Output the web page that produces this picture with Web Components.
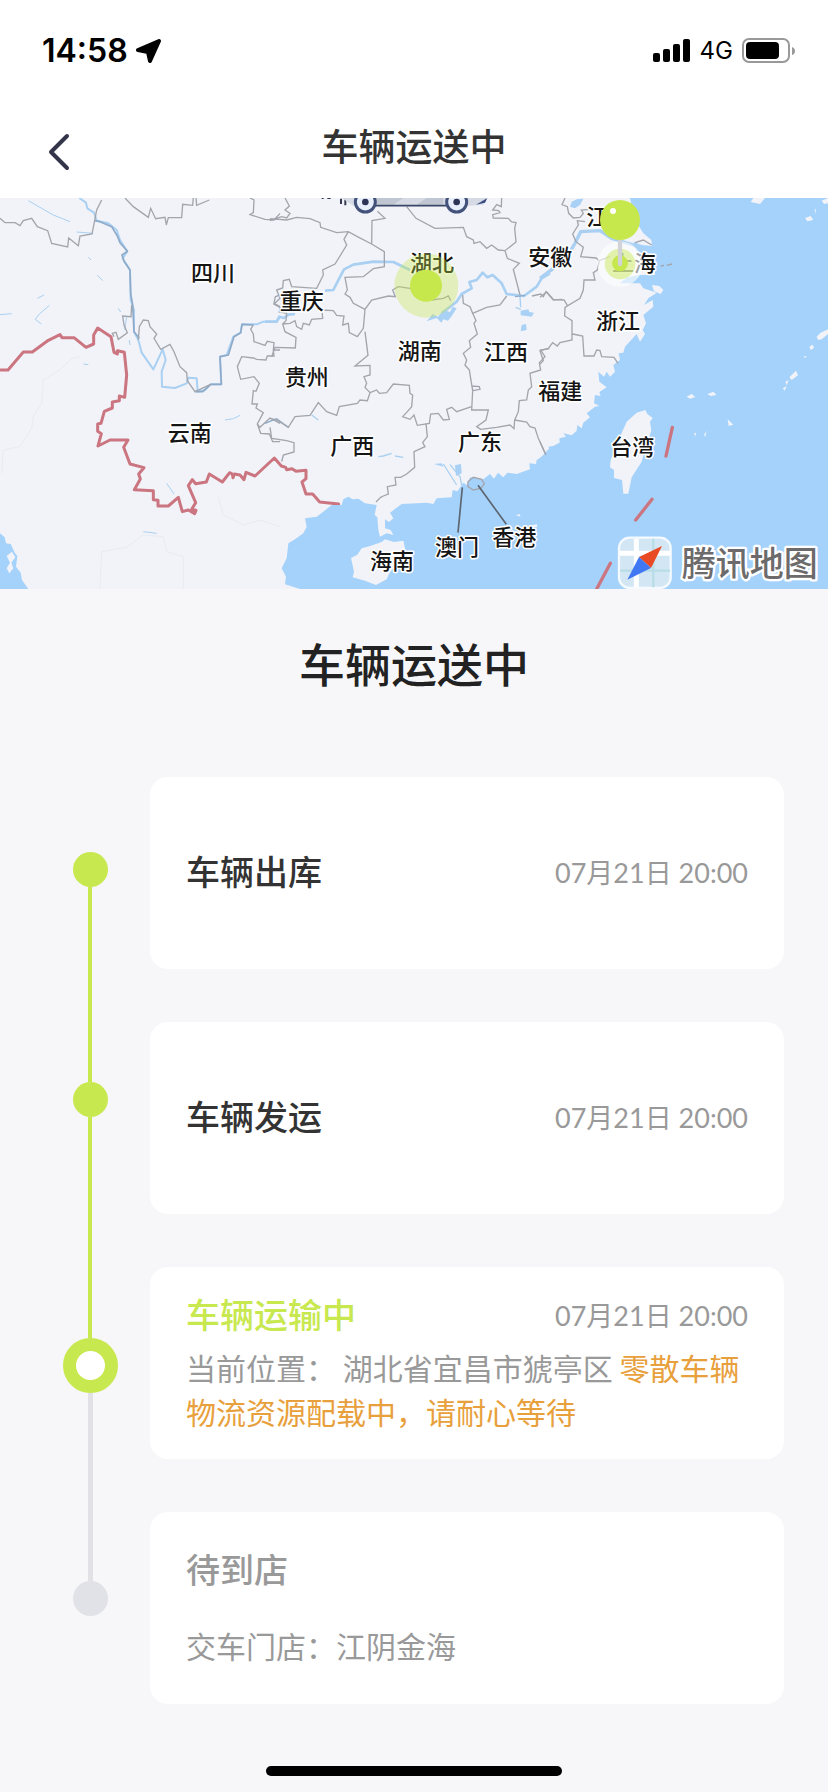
<!DOCTYPE html>
<html lang="zh-CN">
<head>
<meta charset="utf-8">
<meta name="viewport" content="width=device-width, initial-scale=1">
<title>车辆运送中</title>
<style>
body{margin:0;background:#f7f7f9;color:#222;font-family:Inter,"Noto Sans CJK SC",sans-serif}
</style>
</head>
<body>
<track-page>
  <status-bar slot="top" network="4G">14:58</status-bar>
  <nav-bar slot="top">车辆运送中</nav-bar>
  <track-map></track-map>
  <track-steps>
    <span slot="title">车辆运送中</span>
    <step-rail slot="rail"></step-rail>
    <step-card time="07月21日 20:00">车辆出库</step-card>
    <step-card time="07月21日 20:00">车辆发运</step-card>
    <step-card time="07月21日 20:00" state="active">车辆运输中
      <span slot="detail">当前位置： 湖北省宜昌市猇亭区</span>
      <span slot="note">零散车辆物流资源配载中，请耐心等待</span>
    </step-card>
    <step-card state="pending">待到店
      <span slot="detail">交车门店：江阴金海</span>
    </step-card>
  </track-steps>
</track-page>
<script>
const define = (name, html, setup) =>
  customElements.define(
    name,
    class extends HTMLElement {
      constructor() {
        super();
        const t = document.createElement("template");
        t.innerHTML = html;
        this.attachShadow({ mode: "open" }).append(t.content.cloneNode(true));
      }
      connectedCallback() {
        if (setup) setup(this, this.shadowRoot);
      }
    }
  );

define(
  "track-page",
  `<style>
:host{display:flex;flex-direction:column;min-height:100vh}
header{background:#fff}
main{flex:1}
.home{align-self:center;width:36%;max-width:296px;height:10px;margin:16px 0;border-radius:5px;background:#000}
</style>
<header><slot name="top"></slot></header>
<main><slot></slot></main>
<div class="home"></div>`
);

define(
  "status-bar",
  `<style>
:host{display:flex;align-items:center;height:98px;padding:3px 32px 0 42px;box-sizing:border-box;color:#000}
.clock{font-size:32px;line-height:40px;font-weight:600;margin-right:8px}
.net{font-size:24px;line-height:40px;font-weight:400;margin:0 9px 0 9px}
.signal{margin-left:auto}
svg{display:block}
</style>
<span class="clock"><slot></slot></span>
<svg width="26" height="26" viewBox="0 0 26 26"><path d="M23 3 14 23 12 14 2 12Z" stroke="#000" stroke-width="4" stroke-linejoin="round"/></svg>
<svg class="signal" width="38" height="24" viewBox="0 0 38 24">
  <rect y="14" width="7" height="9" rx="2"/><rect x="10" y="10" width="7" height="13" rx="2"/>
  <rect x="20" y="5" width="7" height="18" rx="2"/><rect x="30" width="7" height="23" rx="2"/>
</svg>
<span class="net"></span>
<svg width="54" height="26" viewBox="0 0 54 26">
  <rect x="1" y="1" width="46" height="23" rx="6" fill="none" stroke="#999" stroke-width="2"/>
  <rect x="4" y="4" width="33" height="17" rx="4"/>
  <path d="M50 9q3 1 3 4t-3 4Z" fill="#999"/>
</svg>`,
  (el, root) => {
    root.querySelector(".net").textContent = el.getAttribute("network");
  }
);

define(
  "nav-bar",
  `<style>
:host{display:grid;grid-template-columns:100px 1fr 100px;align-items:center;height:100px}
button{width:60px;height:60px;margin-left:28px;padding:0;border:0;background:none}
svg{display:block}
h1{margin:0;text-align:center;font-size:37px;line-height:50px;font-weight:500;color:#333}
</style>
<button type="button" aria-label="返回"><svg width="60" height="60" viewBox="0 0 60 60"><path d="M39 18 23 34 39 50" fill="none" stroke="#33334a" stroke-width="4" stroke-linecap="round" stroke-linejoin="round"/></svg></button>
<h1><slot></slot></h1>`
);

// [text, x, y] in map units, the centre of each province name
const places = [
  ["四川", 639, 250],
  ["云南", 569, 731],
  ["重庆", 905, 335],
  ["湖北", 1296, 220],
  ["湖南", 1259, 485],
  ["江西", 1518, 489],
  ["贵州", 920, 562],
  ["广西", 1057, 771],
  ["广东", 1440, 759],
  ["澳门", 1371, 1072],
  ["香港", 1543, 1043],
  ["海南", 1176, 1114],
  ["安徽", 1651, 202],
  ["浙江", 1854, 394],
  ["福建", 1681, 604],
  ["台湾", 1897, 772],
  ["江苏", 1825, 83],
  ["上海", 1902, 220]
];

define(
  "track-map",
  `<style>
:host{display:block;height:391px;overflow:hidden;background:#f1f3f8}
svg{display:block;width:100%;height:100%}
text{font-family:"Noto Sans CJK SC",sans-serif;text-anchor:middle;paint-order:stroke;stroke:#fff;stroke-linejoin:round}
#names text{font-size:66px;font-weight:500;fill:#151515;stroke-width:9px}
.brand{font-size:102px;font-weight:500;fill:#6c6a6a;stroke-width:14px}
.sea{fill:#a5d2fb}
.land{fill:#f1f3f8}
.lake{fill:#a9d1f5}
.line{fill:none;stroke:#a3a5ad;stroke-width:4}
.river{fill:none;stroke:#a9d0f2;stroke-width:8;stroke-linejoin:round}
.river.dark{stroke:#8faac8;stroke-width:5}
.state{fill:none;stroke:#cb7580;stroke-width:9;stroke-linejoin:round;stroke-linecap:round}
.faint{fill:none;stroke:#e8ebf1;stroke-width:3}
.lead{stroke:#5d6570;stroke-width:5}
</style>
<svg viewBox="0 24 2484 1173" preserveAspectRatio="xMidYMid slice" role="img" aria-label="地图">
<g>
  <path class="sea" d="M0 1030 14 1042 18 1060 32 1062 45 1090 52 1098 48 1130 62 1148 66 1170 85 1197H0Z"/>
  <path class="land" d="M20 1098 36 1085 46 1102 34 1118 40 1135 28 1150 20 1135 30 1118Z"/>
  <path class="faint" d="M240 500 215 505 180 540 130 570 125 640 100 680 95 715 60 770 10 780 5 850M655 920 670 975 730 1005 780 990 840 1010M300 1197 305 1085 380 1072 430 1035 490 1040 500 1085 550 1100 550 1197"/>
  <path class="river" style="stroke-width:6" d="M238 24 258 38 262 55 282 68 290 92 325 100 350 120 360 150 382 184 368 205 390 240 392 330 402 360 402 425 415 450 425 488 460 538 488 478 497 510 485 545 486 590 525 594 560 580 565 563 590 565 593 605 615 600 632 583 664 583 660 500 680 495 700 440 722 428 726 403 770 403 790 395 830 395 840 380"/>
  <path class="river" style="stroke-width:3" d="M85 32 125 55 160 75 210 95M230 126 280 130M265 202 273 210M292 255 308 272M106 388 118 372 148 346M106 388 124 402M112 325 132 315M0 374 35 371M355 355 362 366M380 380 374 420M388 450 390 465M500 880 522 912M675 690 700 686 720 676M430 1025 470 1030M250 522 265 524"/>
  <path class="river dark" d="M284 92 300 95 335 110 352 138 360 158 382 184 366 195 372 214 390 240 392 310 398 345 402 425 418 445M585 605 608 605 632 583 664 583 660 500 685 495 702 440 722 428 726 403 760 405"/>
  <path class="line" d="M0 85 15 98 45 98 60 107 70 92 95 85 112 110 143 122 155 160 203 171 206 144 235 167 240 138 276 132 284 92 290 60 305 30M375 24 400 50 445 82 452 55 467 86 495 82 499 105 505 83 545 83 548 43 578 46 580 24M588 24 590 46 628 30M750 24 762 30 760 68 750 74 795 88 822 90 840 70"/>
  <path class="line" d="M395 345 393 380 368 378 372 405 382 428 355 448 348 427 337 430 342 440M415 450 418 410 430 390 445 392 450 410 470 432 462 445 482 478 510 463 522 485 540 530 560 548 562 572 585 605 632 583M760 405 752 418 760 432 762 455 795 466 802 454 822 458 820 480 840 480M820 480 822 498 802 498 798 510 770 508 760 504 725 500 712 530 722 568 762 560 778 580 768 604 760 602 756 642 772 642 768 654 790 668 772 702 780 712 810 684 840 700M772 702 782 730 808 732 818 755 840 755M840 315 826 320 822 340 840 350"/>
  <path class="state" d="M0 540H24L70 486H97L145 451 180 434 186 443H222L258 472 281 462V435L293 414 333 440 342 487 352 492V482L373 487 380 555 374 622 358 618V632L337 636V654L313 664 303 700 293 702V724L304 731 294 768 330 750H384L371 772 390 822 432 833 416 852 421 867 403 899 460 902V929L474 931V948H505L535 922 547 965 565 960 584 971 588 961 575 958 587 938 565 887 577 869 587 881 619 876 628 852 667 876 689 848 697 852 699 863 703 852 720 855 732 869 738 847 765 858 823 804 844 828 857 832 860 839 876 836 888 844 918 841V866L906 876 918 912H938L959 936 1016 942"/>
</g>
<g transform="translate(810 0)">
  <path class="sea" d="M90 1197 45 1183 48 1160 35 1135 50 1105 55 1060 75 1048 100 1030 110 1010 105 985 140 980 160 965 185 945 215 945 220 928 235 920 248 928 265 926 285 940 320 945 314 975 322 982 325 1020 330 1040 350 1030 370 1035 362 1020 345 1015 345 988 357 996 370 985 360 968 395 942 440 940 470 938 490 942 500 925 545 922 548 900 562 904 580 878 590 885 600 862 640 868 660 852 672 866 684 848 700 862 712 848 740 852 780 838 778 820 798 822 800 810 815 800 838 775 900 740V1197Z"/>
  <path class="land" d="M243 1104 262 1094 275 1075 300 1068 335 1056 345 1048 372 1056 400 1052 408 1088 395 1120 372 1132 358 1150 350 1168 318 1185 285 1172 248 1162 252 1145ZM738 976 748 972 752 980ZM775 1010 800 1002 802 1012Z"/>
  <path class="lake" d="M470 394 488 372 504 380 520 360 540 366 548 350 560 355 545 378 534 392 520 388 514 398 500 384ZM752 362 775 358 778 366 792 368 785 380 752 376ZM755 405 768 402 770 420 752 424ZM492 822 515 820 520 830ZM555 826 573 822 575 850 558 858Z"/>
  <path class="river" style="stroke-width:4" d="M520 822 560 885M540 824 570 860 575 885M125 675 145 690M325 800 340 798 365 790M375 798 400 802M750 318 752 352M737 352 752 358"/>
  <path class="river" d="M-15 395 20 395 28 380 42 384 55 374 75 372M165 302 190 300 200 280 222 238 250 224 310 215 370 216 420 240M515 370 560 335 575 312 605 295 598 276 620 270 638 248 652 262 668 255 695 280 710 312 762 318 800 290 815 265 840 250"/>
  <path class="river dark" style="stroke-width:4" d="M-15 700 20 686 55 712M735 320 765 316"/>
  <path class="line" d="M0 92 35 80 50 84 60 70 45 60 58 48 45 24M0 86 50 90 80 82 120 86 150 98 152 112 200 128 235 125 262 140 305 162 306 92 345 85 322 64M305 162 343 185V230L310 236 280 260 225 262 232 300 225 312 240 322 250 340 285 358M235 125 222 148 230 165 210 198 195 222 158 240 160 255 140 295 65 290 58 268 40 272 38 294 20 300 30 325 12 342 30 352 28 366 50 370 48 392 38 402 45 425 78 442 76 474 15 472 5 500M38 402 60 400 75 392 80 410 95 418 100 400 118 405 125 388 158 385 156 360 190 362 200 376 222 378 218 405 235 400 238 428 262 440 280 415 285 358 305 330 355 318 376 320 368 300 385 290 440 298M285 425 294 496 255 528 300 526 300 555 282 560 290 580 285 592 300 608M300 608 320 600 328 610 350 608 370 582 418 586 420 610 428 615 425 650 412 665 398 680 420 688 432 675 442 706 478 700 482 672 505 670 520 690 538 688 530 658 545 652 560 665 605 650M0 685 20 690 55 712 75 680 120 676 145 638 170 665 200 676 208 650 262 640 270 630 292 632 300 608M0 712 5 745 50 752 72 758 72 786 40 795 35 815"/>
  <path class="line" d="M468 700 472 740 458 758 465 770 432 785 434 832 410 852 392 862 375 862 378 885 352 890 355 912 340 918 332 922 318 936M410 50 438 85 495 115 580 112 590 140 610 150 612 160 630 155 650 175 665 165 685 180 705 182 738 156 734 115 738 98 725 96 715 85 670 84 668 74 690 68 686 62 668 60 680 44 694 50 695 24M705 182 712 205 748 220 730 238 750 315M578 315 580 340 600 350 608 370 650 352 690 345 710 318M608 370 618 392 612 400 622 432 598 452 602 472 580 490 590 510 585 525 598 540 602 565 608 602 630 598 628 590 605 588M608 602 605 660 655 660 648 690 620 710 632 718 680 712 720 705 732 716 734 690 745 665 748 632 770 630 775 600 785 590 780 550 812 540 808 518 825 500 812 480 838 476M734 690 770 696 780 710 795 714 805 745 828 796M485 330 520 325 535 318 542 332"/>
  <path class="line" d="M786 318 812 312 820 320 828 305 850 330 876 328M594 875 610 862 635 868 643 882 632 895 610 900 594 890Z"/>
  <path class="lead" d="M577 892 564 1028M624 886 709 1003"/>
</g>
<g transform="translate(1620 0)">
  <path class="sea" d="M0 1197V805L20 785 30 782 25 770 60 765 58 745 78 740 70 730 95 736 110 722 112 705 125 715 130 698 150 682 140 670 165 650 178 648 162 640 165 615 182 618 178 606 200 592 178 575 175 545 192 560 200 545 210 560 225 545 220 525 240 510 236 490 250 488 255 470 290 432 300 455 315 432 308 420 318 400 310 375 340 350 338 330 312 345 325 325 350 308 310 295 300 280 240 280 262 262 300 255 345 255 345 215 290 185 280 155 305 165 336 168 334 150 310 130 285 90 270 24H864V1197Z"/>
  <path class="land" d="M316 660 322 672 338 684 330 695 334 722 318 768 305 815 275 862 265 911H250L246 870 222 864 222 840 210 832 212 810 236 750 260 695 290 668ZM336 285 358 288 370 300 362 312 342 304ZM632 36 640 24H675L660 42ZM845 32 864 24V40L852 42ZM795 84 812 78 820 90 802 94ZM824 60 828 56 826 72ZM830 440 842 428 864 418V432L845 448 834 450ZM808 470 818 464 822 474 812 480ZM790 500 800 498 796 504ZM748 562 768 542 774 556 755 570ZM736 575 746 570 740 586ZM728 595 740 588 734 602ZM440 620 455 612 466 621 450 626ZM502 612 520 605 530 615 512 618ZM563 688 580 704 566 708ZM462 730 468 728 466 740ZM492 735 500 722 496 740Z"/>
  <path class="lake" d="M90 50 95 35 110 28 130 26 120 45 105 55Z"/>
  <path class="river" style="stroke-width:10" d="M0 265 40 235 75 210 105 160 122 125 180 122 215 145 280 165 335 195"/>
  <path class="line" d="M75 24 66 44 82 50 86 70 100 84 120 82 130 70 124 60 150 58M135 95 112 92 115 105 98 132 108 155 130 172 122 200 168 204 178 212 172 240 160 248 165 270 132 270 130 300 120 325 75 352 74 378 96 392V450L60 458 52 468 38 458 25 475 0 482 10 512 0 522M98 432 128 438 132 498 162 498 170 480 180 482 185 500 222 502 234 520M0 322 20 306 40 328 72 330 82 346M178 212 210 200M285 158 310 150 335 165M362 228 372 226M380 226 396 222M0 755 18 795"/>
  <path class="state" style="stroke-width:10" d="M397 712 378 798M336 928 287 990M211 1120 170 1197"/>
</g>
<g id="names"></g>
<g transform="translate(810 0)">
  <!-- transport car, only its lower edge is inside the map -->
  <path d="M155 24h6M172 24h10M213 26v16M226 26v20" stroke="#333a50" stroke-width="6"/>
  <path d="M215 24H650L640 44 600 47H250Z" fill="#d5dae5"/>
  <path d="M320 24H400L370 44H320ZM470 24H520V44H440Z" fill="#c0c6d1"/>
  <path d="M300 47H560" stroke="#3a4766" stroke-width="5"/>
  <path d="M618 44 652 24 645 38Z" fill="#3b4c80"/>
  <g fill="#e8effc" stroke="#43527a" stroke-width="9"><circle cx="286" cy="36" r="30"/><circle cx="560" cy="36" r="30"/></g>
  <circle cx="286" cy="36" r="10" fill="#2c3555"/><circle cx="560" cy="36" r="10" fill="#2c3555"/>
  <circle cx="469" cy="287" r="96" fill="#c6e84d" fill-opacity=".35"/>
  <circle cx="468" cy="287" r="48" fill="#c6e84d"/>
</g>
<g transform="translate(1620 0)">
  <circle cx="240" cy="222" r="68" fill="#fff" fill-opacity=".6"/>
  <circle cx="240" cy="222" r="46" fill="#c6e84d" fill-opacity=".45"/>
  <circle cx="240" cy="220" r="24" fill="#c6e84d"/>
  <path d="M240 145V222" stroke="#d2d3d8" stroke-width="13" stroke-linecap="round"/>
  <circle cx="240" cy="90" r="60" fill="#c6e84d"/>
  <circle cx="219" cy="63" r="9" fill="#fff"/>
  <rect x="237" y="1043" width="155" height="151" rx="32" fill="#d3e6f4" stroke="#f4faff" stroke-width="7"/>
  <path d="M289 1046V1192M240 1090H390" stroke="#fff" stroke-width="15"/>
  <path d="M340 1046V1192M240 1142H390" stroke="#b7dde6" stroke-width="7"/>
  <path d="M366 1068 297 1101 333 1134Z" fill="#e94a25"/>
  <path d="M262 1169 297 1101 333 1134Z" fill="#4078f4"/>
  <text class="brand" x="629" y="1158">腾讯地图</text>
</g>
</svg>`,
  (el, root) => {
    root.querySelector("#names").append(
      ...places.map(([name, x, y]) => {
        const t = document.createElementNS("http://www.w3.org/2000/svg", "text");
        t.setAttribute("x", x);
        t.setAttribute("y", y + 22);
        t.textContent = name;
        return t;
      })
    );
  }
);

define(
  "track-steps",
  `<style>
:host{display:block;padding:46px 44px 46px 62px}
h2{margin:0 0 82px;padding-right:18px;box-sizing:border-box;text-align:center;font-size:46px;line-height:60px;font-weight:500;color:#222}
.body{display:grid;grid-template-columns:56px 1fr;column-gap:32px}
.cards{display:flex;flex-direction:column;gap:53px}
</style>
<h2><slot name="title"></slot></h2>
<div class="body">
  <slot name="rail"></slot>
  <div class="cards"><slot></slot></div>
</div>`
);

define(
  "step-rail",
  `<style>
:host{display:flex;flex-direction:column;align-items:center;padding:75px 0 88px}
i{box-sizing:border-box;border-radius:50%;background:#c8e84f}
.dot{width:35px;height:35px}
.ring{width:55px;height:55px;border:13px solid #c8e84f;background:#fff}
b{width:4px;background:#c8e84f}
b.first{flex:195}
b.second{flex:221}
b.rest{flex:188;width:5px;background:#e1e1e6}
i.rest{background:#e1e1e8}
</style>
<i class="dot"></i><b class="first"></b><i class="dot"></i><b class="second"></b><i class="ring"></i><b class="rest"></b><i class="dot rest"></i>`
);

define(
  "step-card",
  `<style>
:host{display:flex;flex-direction:column;justify-content:center;gap:7px;min-height:192px;box-sizing:border-box;padding:20px 36px;border-radius:18px;background:#fff}
.row{display:flex;justify-content:space-between;align-items:center}
h3{margin:0;font-size:34px;line-height:44px;font-weight:500;color:#333}
time{font-family:Lato,"Noto Sans CJK SC",sans-serif;font-size:27px;line-height:44px;color:#999}
p{margin:0;font-size:30px;line-height:44px;font-weight:400;color:#999;font-family:"Noto Sans CJK SC",sans-serif}
.note{color:#e8a03c}
:host([state=active]) h3{color:#c8e84f}
:host([state=pending]){gap:30px}
:host([state=pending]) h3{color:#999}
[hidden]{display:none}
</style>
<div class="row"><h3><slot></slot></h3><time></time></div>
<p><slot name="detail"></slot> <span class="note"><slot name="note"></slot></span></p>`,
  (el, root) => {
    root.querySelector("time").textContent = el.getAttribute("time") || "";
    root.querySelector("p").hidden = !el.hasAttribute("state");
  }
);
</script>
</body>
</html>
